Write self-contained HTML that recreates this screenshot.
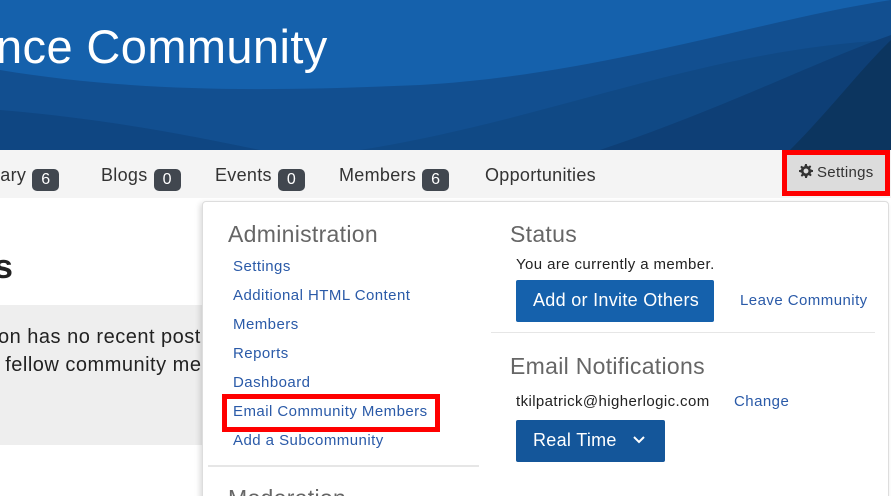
<!DOCTYPE html>
<html><head><meta charset="utf-8">
<style>
*{margin:0;padding:0;box-sizing:border-box}
html,body{width:891px;height:496px;overflow:hidden;background:#fff;font-family:"Liberation Sans",sans-serif}
#root{position:relative;width:891px;height:496px;overflow:hidden}
.banner{position:absolute;left:0;top:0;width:891px;height:150px;background:#1561ac;overflow:hidden}
.banner h1{position:absolute;left:-4px;top:19px;color:#fff;font-weight:400;font-size:47px;letter-spacing:0.4px}
.nav{position:absolute;left:0;top:150px;width:891px;height:48px;background:#f4f4f4}
.nav span.t{position:absolute;top:15px;font-size:18px;color:#333;letter-spacing:0.3px}
.badge{display:inline-block;background:#41474f;color:#fff;border-radius:5px;font-size:16px;width:27px;height:22px;line-height:22px;text-align:center;margin-left:6px;vertical-align:-3px;letter-spacing:0}
.set{position:absolute;left:782px;top:150px;width:108px;height:46px;background:#f00;padding:5px}
.set div{background:#dcdcdc;width:100%;height:100%;font-size:15px;color:#333;padding:9px 0 0 12px;letter-spacing:.3px}
.heading{position:absolute;left:-6px;top:248px;font-size:34px;font-weight:700;color:#222}
.gray{position:absolute;left:0;top:305px;width:202px;height:140px;background:#eee;overflow:hidden}
.gray p{position:absolute;left:0;font-size:20px;color:#222;white-space:nowrap;letter-spacing:.5px}
.dd{position:absolute;left:202px;top:201px;width:687px;height:310px;background:#fff;border:1px solid #ddd;border-radius:4px;box-shadow:-2px 2px 6px rgba(0,0,0,.15)}
.h{position:absolute;font-size:23px;color:#666;letter-spacing:.3px;white-space:nowrap}
.lk{position:absolute;left:233px;font-size:15px;color:#2a5aa8;letter-spacing:.45px;white-space:nowrap}
.btn{position:absolute;background:#1561ac;color:#fff;font-size:18px;border-radius:2px;letter-spacing:.3px}
.hr{position:absolute;height:2px;background:#e6e6e6}
.txt{position:absolute;font-size:15px;color:#222;letter-spacing:.4px}
</style></head><body><div id="root">
<div class="banner">
<svg width="891" height="150" style="position:absolute;left:0;top:0">
<path d="M0,70 C150,95 300,90 420,85 C600,75 760,20 891,0 L891,150 L0,150Z" fill="#124f90"/>
<path d="M0,110 C120,120 210,140 260,150 L0,150Z" fill="#0f4682"/>
<path d="M360,150 C550,120 700,50 891,40 L891,150Z" fill="#104985"/>
<path d="M600,150 C720,110 820,60 891,35 L891,150Z" fill="#0e3f76"/>
<path d="M790,150 C830,110 860,70 891,40 L891,150Z" fill="#0c355f"/>
</svg>
<h1>nce Community</h1>
</div>
<div class="nav">
<span class="t" style="left:-6px">rary<span class="badge">6</span></span>
<span class="t" style="left:101px">Blogs<span class="badge">0</span></span>
<span class="t" style="left:215px">Events<span class="badge">0</span></span>
<span class="t" style="left:339px">Members<span class="badge">6</span></span>
<span class="t" style="left:485px">Opportunities</span>
</div>
<div class="set"><div><svg width="14" height="14" viewBox="0 0 16 16" style="vertical-align:-1px;margin-right:4px"><path fill="#333" d="M7,0h2l.4,2.2 1.3.6 1.9-1.3 1.4,1.4-1.3,1.9.6,1.3L16,7v2l-2.2.4-.6,1.3 1.3,1.9-1.4,1.4-1.9-1.3-1.3.6L9,16H7l-.4-2.2-1.3-.6-1.9,1.3-1.4-1.4 1.3-1.9-.6-1.3L0,9V7l2.2-.4.6-1.3L1.5,3.4 2.9,2 4.8,3.3l1.3-.6Z M8,5.2a2.8,2.8 0 1,0 .01,0Z"/></svg>Settings</div></div>
<div class="heading">s</div>
<div class="gray">
<p style="top:21px;left:-2px">on has no recent post</p>
<p style="top:49px;left:-8px">r fellow community me</p>
</div>
<div class="dd"></div>
<div class="h" style="left:228px;top:221px">Administration</div>
<div class="lk" style="top:258px">Settings</div>
<div class="lk" style="top:287px">Additional HTML Content</div>
<div class="lk" style="top:316px">Members</div>
<div class="lk" style="top:345px">Reports</div>
<div class="lk" style="top:374px">Dashboard</div>
<div style="position:absolute;left:222px;top:394px;width:218px;height:38px;border:5px solid #f00"></div>
<div class="lk" style="top:403px">Email Community Members</div>
<div class="lk" style="top:432px">Add a Subcommunity</div>
<div class="hr" style="left:208px;top:465px;width:271px"></div>
<div class="h" style="left:228px;top:485px">Moderation</div>
<div class="h" style="left:510px;top:221px">Status</div>
<div class="txt" style="left:516px;top:256px">You are currently a member.</div>
<div class="btn" style="left:516px;top:280px;width:198px;height:42px;padding:10px 0 0 17px">Add or Invite Others</div>
<div class="lk" style="left:740px;top:292px">Leave Community</div>
<div class="hr" style="left:491px;top:332px;width:384px;height:1px"></div>
<div class="h" style="left:510px;top:353px">Email Notifications</div>
<div class="txt" style="left:516px;top:393px">tkilpatrick@higherlogic.com</div>
<div class="lk" style="left:734px;top:393px">Change</div>
<div class="btn" style="left:516px;top:420px;width:149px;height:42px;padding:10px 0 0 17px;background:#14569a">Real Time <svg width="14" height="10" viewBox="0 0 14 10" style="margin-left:10px;vertical-align:1px"><path d="M2,2 L7,7 L12,2" stroke="#fff" stroke-width="2" fill="none"/></svg></div>
</div></body></html>
